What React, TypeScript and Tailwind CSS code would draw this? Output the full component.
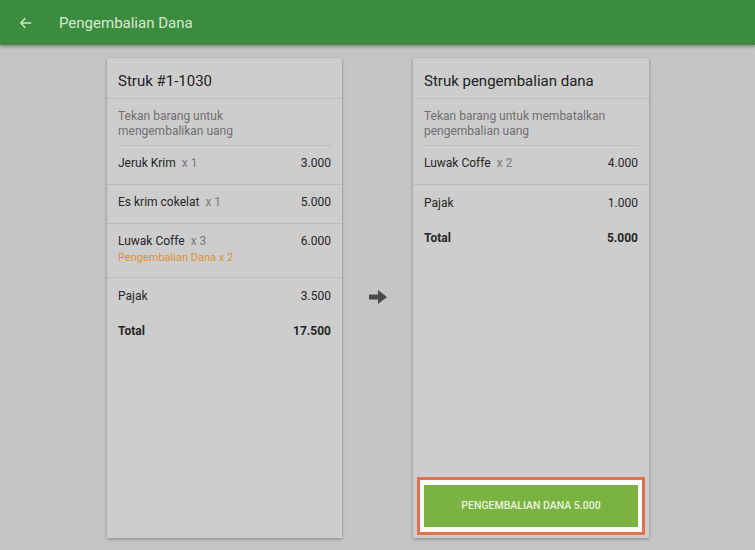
import React from "react";

function Row({ name, qty, value, note, border = true }: { name: string; qty: string; value: string; note?: string; border?: boolean }) {
  return (
    <div className={`px-[11px] ${border ? "border-b border-[#bcbcbc]" : ""}`}>
      <div className={`flex justify-between pt-[9px] ${note ? "pb-[11px]" : "pb-[13px]"} text-[12px] leading-[16px] text-[#262626]`}>
        <div>
          <div>
            {name}
            <span className="ml-[6px] text-[#7a7a7a]">{qty}</span>
          </div>
          {note && <div className="mt-[1px] text-[11px] leading-[16px] text-[#e0912e]">{note}</div>}
        </div>
        <div>{value}</div>
      </div>
    </div>
  );
}

function Card({ title, sub, children, footer, width }: { title: string; sub: string; children: React.ReactNode; footer?: React.ReactNode; width: string }) {
  return (
    <div className={`flex ${width} flex-col bg-[#cdcdcd] shadow-[0_1px_3px_rgba(0,0,0,0.35)]`}>
      <div className="h-[41px] border-b border-[#bcbcbc] px-[11px] pt-[14px] text-[15px] leading-[18px] text-[#222]">{title}</div>
      <div className="px-[11px]">
        <div className="whitespace-pre-line border-b border-[#bcbcbc] pb-[6px] pt-[10px] text-[12px] leading-[15px] text-[#6f6f6f]">{sub}</div>
      </div>
      {children}
      <div className="flex-1" />
      {footer}
    </div>
  );
}

function Totals({ pajak, total }: { pajak: string; total: string }) {
  return (
    <div className="px-[11px] pt-[10px] text-[12px] text-[#262626]">
      <div className="flex justify-between leading-[16px]">
        <span>Pajak</span>
        <span>{pajak}</span>
      </div>
      <div className="mt-[19px] flex justify-between font-bold leading-[16px]">
        <span>Total</span>
        <span>{total}</span>
      </div>
    </div>
  );
}

export default function App() {
  return (
    <div className="flex h-[550px] w-[755px] flex-col bg-[#c5c5c5]" style={{ fontFamily: "Roboto, 'Noto Sans', sans-serif" }}>
      <div className="z-10 flex h-[45px] shrink-0 items-center bg-[#3b8c3f] shadow-[0_2px_3px_rgba(0,0,0,0.3)]">
        <svg className="ml-[19px]" width="14" height="14" viewBox="0 0 24 24" fill="none" stroke="#cfe5c8" strokeWidth="2.4">
          <path d="M21 12H4M11 4l-8 8 8 8" />
        </svg>
        <span className="ml-[26px] mt-[1px] text-[15px] text-[#d7e9d0]">Pengembalian Dana</span>
      </div>
      <div className="flex flex-1 pb-[12px] pl-[107px] pt-[13px]">
        <Card width="w-[235px]" title="Struk #1-1030" sub={"Tekan barang untuk\nmengembalikan uang"}>
          <Row name="Jeruk Krim" qty="x 1" value="3.000" />
          <Row name="Es krim cokelat" qty="x 1" value="5.000" />
          <Row name="Luwak Coffe" qty="x 3" value="6.000" note="Pengembalian Dana x 2" />
          <Totals pajak="3.500" total="17.500" />
        </Card>
        <div className="flex w-[71px] items-center justify-center pb-[2px]">
          <svg width="18" height="14" viewBox="0 0 18 14">
            <path d="M0 4.5H9V0L18 7L9 14V9.5H0Z" fill="#4a4a4a" />
          </svg>
        </div>
        <Card
          width="w-[236px]"
          title="Struk pengembalian dana"
          sub={"Tekan barang untuk membatalkan\npengembalian uang"}
          footer={
            <div className="mx-[4px] mb-[3px] border-[3px] border-[#e0714f] bg-white px-[4px] py-[5px]">
              <div className="flex h-[42px] items-center justify-center bg-[#7ab341] text-[10.5px] font-medium text-[#e8f3df]">
                PENGEMBALIAN DANA 5.000
              </div>
            </div>
          }
        >
          <Row name="Luwak Coffe" qty="x 2" value="4.000" />
          <Totals pajak="1.000" total="5.000" />
        </Card>
      </div>
    </div>
  );
}
